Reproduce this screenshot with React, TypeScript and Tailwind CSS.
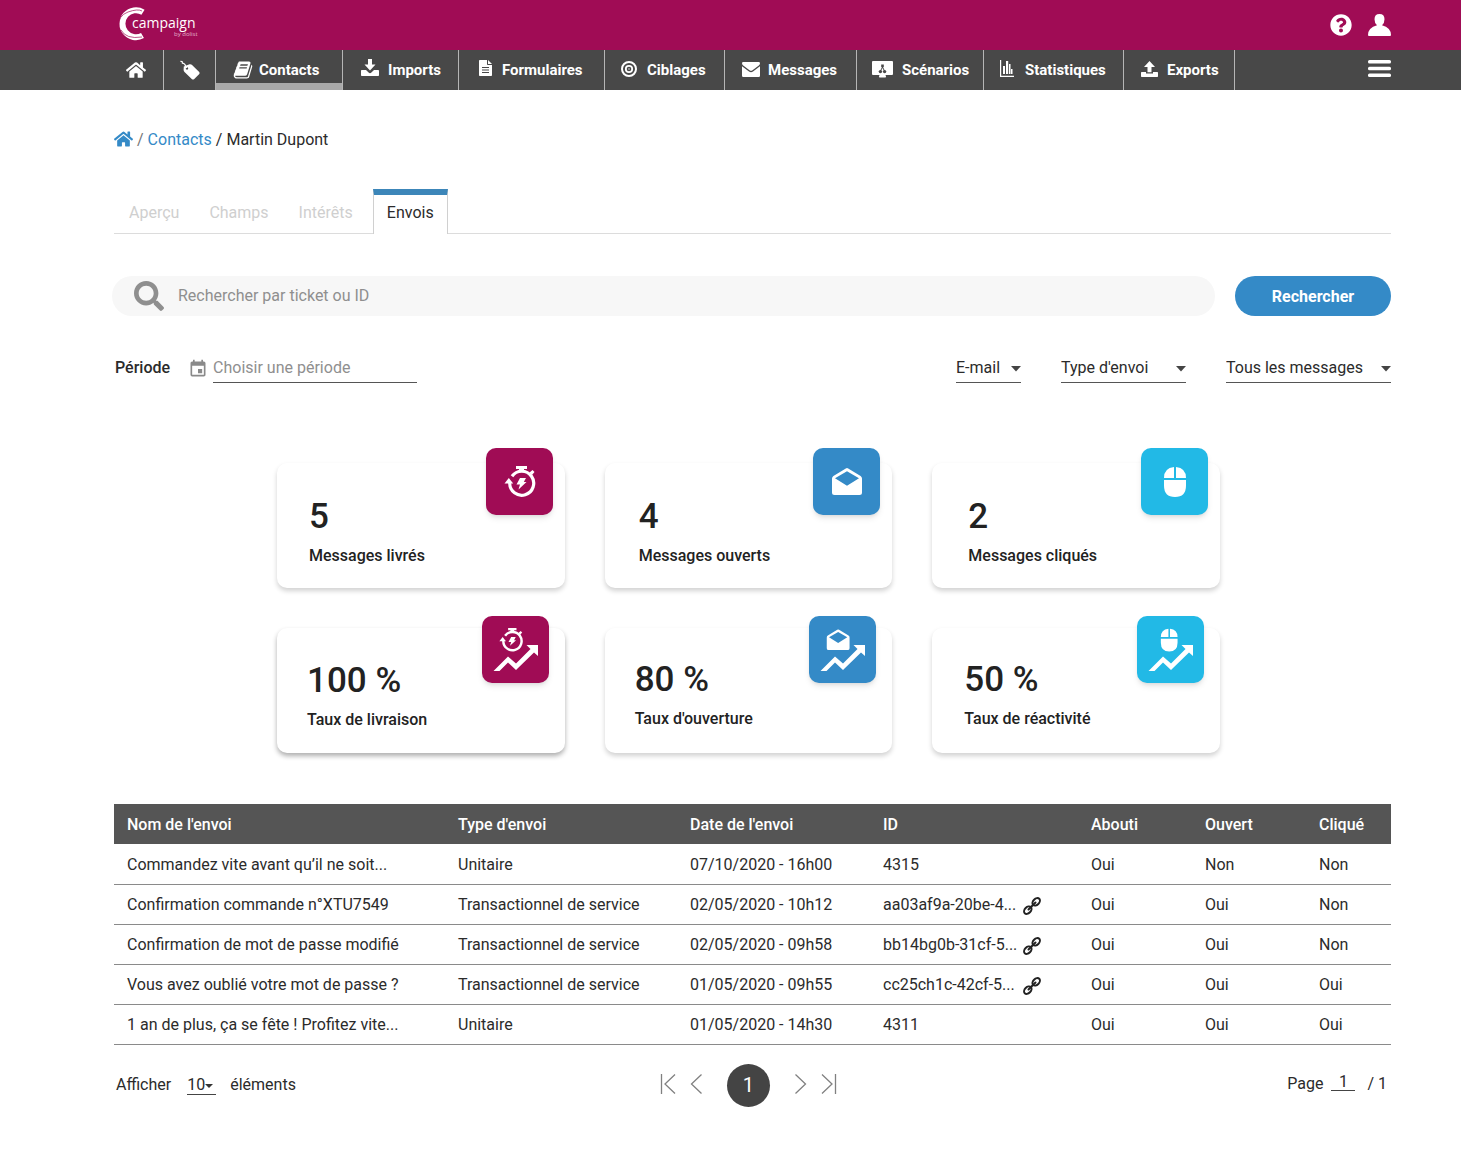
import React from "react";
import { FaHome, FaQuestionCircle, FaSearch } from "react-icons/fa";
import { MdEvent } from "react-icons/md";

function TagIcon() {
  return (
    <svg viewBox="0 0 20 20" className="h-5 w-5" fill="none">
      <path
        fill="currentColor"
        fillRule="evenodd"
        d="M3.800 6.500 9.500 4.300Q10.800 3.900 11.800 4.800L19.200 12Q20 13 19.300 14L14 19.200Q13 20 12 19.200L4.500 12Q3.700 11.200 3.600 10ZM7 7.200A1.200 1.200 0 1 0 7 9.600A1.200 1.200 0 1 0 7 7.200Z"
      />
      <path d="M.8 1.300 2.200 1.800 2.400 3.200Q4 3.400 4.800 4.400L6.500 7.500" stroke="currentColor" strokeWidth="1.200" strokeLinecap="round" />
    </svg>
  );
}

function BookIcon() {
  return (
    <svg viewBox="0 0 1792 1792" className="h-5 w-5" fill="currentColor">
      <path d="M1703 478q40 57 18 129l-275 906q-19 64-76.5 107.5t-122.5 43.5h-923q-77 0-148.5-53.5t-99.5-131.5q-24-67-2-127 0-4 3-27t4-37q1-8-3-21.5t-3-19.5q2-11 8-21t16.5-23.500 16.500-23.500q23-38 45-91.500t30-91.500q3-10 .5-30t-.5-28q3-11 17-28t17-23q21-36 42-92t25-90q1-9-2.500-32t.5-28q4-13 22-30.500t22-22.500q19-26 42.500-84.500t27.500-96.500q1-8-3-25.500t-2-26.500q2-8 9-18t18-23 17-21q8-12 16.500-30.500t15-35 16-36 19.500-32 26.500-23.500 36-11.500 47.500 5.500l-1 3q38-9 51-9h761q74 0 114 56t18 130l-274 906q-36 119-71.500 153.500t-128.500 34.500h-869q-27 0-38 15-11 16-1 43 24 70 144 70h923q29 0 56-15.500t35-41.500l300-987q7-22 5-57 38 15 59 43zm-1064 2q-4 13 2 22.500t20 9.500h608q13 0 25.500-9.500t16.500-22.500l21-64q4-13-2-22.500t-20-9.500h-608q-13 0-25.500 9.500t-16.500 22.500zm-83 256q-4 13 2 22.500t20 9.500h608q13 0 25.500-9.500t16.500-22.500l21-64q4-13-2-22.500t-20-9.500h-608q-13 0-25.500 9.500t-16.500 22.500z" />
    </svg>
  );
}

function DownloadIcon() {
  return (
    <svg viewBox="0 0 18 18" className="mb-1 h-[18px] w-[18px]" fill="currentColor">
      <path d="M7 0h4v5.500h3.500L9 11.500 3.500 5.500H7Z" />
      <path d="M.8 11H5l2.600 2.600q1.400 1.200 2.800 0L13 11h4.200q.8 0 .8.800v4.400q0 .8-.8.800H.8q-.8 0-.8-.8v-4.400Q0 11 .8 11Z" />
    </svg>
  );
}

function UploadIcon() {
  return (
    <svg viewBox="0 0 17 18" className="mb-0.5 h-[18px] w-[17px]" fill="currentColor">
      <path d="M8.500 1 14 7h-3.500v5.200h-4V7H3Z" />
      <path d="M.7 12H5v1.500h7V12h4.300q.7 0 .7.700v3.600q0 .7-.7.700H.7q-.7 0-.7-.7v-3.600Q0 12 .7 12Z" />
    </svg>
  );
}

function FileIcon() {
  return (
    <svg viewBox="0 0 13 16" className="mb-1 h-4 w-[13px]">
      <path fill="currentColor" d="M.8 0H8v4.200q0 .8.800.8H13v10.200q0 .8-.8.800H.8q-.8 0-.8-.8V.8Q0 0 .8 0ZM9 0l4 4H9Z" />
      <path stroke="#484848" strokeWidth="1" d="M3 7.500h7M3 10h7M3 12.500h7" />
    </svg>
  );
}

function TargetIcon() {
  return (
    <svg viewBox="0 0 16 16" className="mb-0.5 h-4 w-4" fill="none" stroke="currentColor">
      <circle cx="8" cy="8" r="7" strokeWidth="2" />
      <circle cx="8" cy="8" r="3.200" strokeWidth="1.800" />
      <circle cx="8" cy="8" r=".7" fill="currentColor" stroke="none" />
    </svg>
  );
}

function EnvelopeIcon() {
  return (
    <svg viewBox="0 0 18 15" className="mb-0.5 h-[15px] w-[18px]" fill="currentColor">
      <path d="M1.300 0h15.400Q18 0 18 1.300 18 2.600 16.800 3.500L10.500 8.300Q9 9.400 7.500 8.300L1.200 3.500Q0 2.600 0 1.300 0 0 1.300 0Z" />
      <path d="M0 4.300 7 9.500q2 1.400 4 0l7-5.200v9.400q0 1.300-1.300 1.300H1.300Q0 15 0 13.700Z" />
    </svg>
  );
}

function ScenarioIcon() {
  return (
    <svg viewBox="0 0 21 17" className="mb-0.5 h-[17px] w-[21px]" fill="currentColor">
      <path d="M1 0h19q1 0 1 1v12q0 1-1 1h-6.500l.5 1.500q.2 1-.8 1H7.800q-1 0-.8-1l.5-1.500H1q-1 0-1-1V1q0-1 1-1Z" />
      <g fill="#484848">
        <rect x="9.200" y="3.500" width="2.600" height="2.600" />
        <circle cx="8.400" cy="10.600" r="1.700" />
        <circle cx="12.600" cy="10.600" r="1.700" />
        <path d="M10 6h1l2 4h-1l-1.500-3L9 10H8Z" />
      </g>
    </svg>
  );
}

function ChartIcon() {
  return (
    <svg viewBox="0 0 14 17" className="mb-1 h-[17px] w-[14px]" fill="currentColor">
      <path d="M0 0h1.200v15.800H14V17H0ZM3 6h2v8H3ZM6 1h2.200v13H6ZM9 4h1.500v10H9ZM11 9h1.500v5H11Z" />
    </svg>
  );
}

function UserIcon() {
  return (
    <svg viewBox="0 0 23 22" className="h-[22px] w-[23px]" fill="currentColor">
      <path d="M11.500 0q5 0 5 5.200 0 4-2.500 6 9 2.500 9 9.800 0 1-1 1H1q-1 0-1-1 0-7.300 9-9.800-2.500-2-2.500-6Q6.500 0 11.500 0Z" />
    </svg>
  );
}

function LinkIcon() {
  return (
    <svg viewBox="0 0 18 18" className="mt-0.5 h-[18px] w-[18px]" fill="none" stroke="#222" strokeWidth="2">
      <ellipse cx="4.800" cy="13.200" rx="4.300" ry="3" transform="rotate(-45 4.800 13.200)" />
      <ellipse cx="13.200" cy="4.800" rx="4.300" ry="3" transform="rotate(-45 13.200 4.800)" />
      <path d="M5.500 12.500l7-7" strokeLinecap="round" />
    </svg>
  );
}

function Stopwatch() {
  return (
    <g>
      <path d="M12 0H23V3H20V5H15V3H12Z" fill="#fff" />
      <path d="M28.500 4 30.500 6 28 9 25.500 6.500Z" fill="#fff" />
      <path d="M8 10.200A12 12 0 1 1 5.700 17" fill="none" stroke="#fff" strokeWidth="3.200" />
      <path d="M.5 17.500 4.800 12 9.200 17.500Z" fill="#fff" />
      <path d="M16 12h6l-2.200 4H22.500L14.500 23.500l1.500-5H12.500Z" fill="#fff" />
    </g>
  );
}

function OpenMail() {
  return (
    <path
      fill="#fff"
      fillRule="evenodd"
      d="M16 2Q16.600 2 17.200 2.400L29.600 10Q31 11 31 12.500V26.500Q31 29 28.500 29H3.500Q1 29 1 26.500V12.500Q1 11 2.400 10L14.800 2.400Q15.400 2 16 2ZM16 5.200 4 12.300 16 19.700 28 12.300Z"
    />
  );
}

function Mouse() {
  return (
    <path fill="#fff" d="M15 1v11H5Q5 2 15 1ZM17 1v11H27Q27 2 17 1ZM5 14H27V19.500Q27 31 16 31T5 19.500Z" />
  );
}

function TrendArrow() {
  return <path d="M11.500 55 26 40.500 34 47.500 48.500 33 44.500 29H56V40L52 36.500 34 54 26 46.500 17.500 55Z" fill="#fff" />;
}

function Badge({ glyph, trend, tone }: { glyph: React.ReactNode; trend: boolean; tone: string }) {
  return (
    <div className={`absolute size-[67px] rounded-[10px] shadow-md ${trend ? "-top-3 right-4" : "-top-[15px] right-3"} ${tone}`}>
      <svg viewBox="0 0 67 67" className="size-full">
        {trend ? (
          <>
            <g transform="translate(17 12) scale(.76)">{glyph}</g>
            <TrendArrow />
          </>
        ) : (
          <g transform="translate(18 18)">{glyph}</g>
        )}
      </svg>
    </div>
  );
}

const stats = [
  { value: "5", label: "Messages livrés", glyph: <Stopwatch />, trend: false, tone: "bg-[#a00c55]", pad: "pt-8 pl-8", shadow: "shadow-[0_3px_5px_rgba(0,0,0,0.18)]" },
  { value: "4", label: "Messages ouverts", glyph: <OpenMail />, trend: false, tone: "bg-[#348ac7]", pad: "pt-8 pl-[34px]", shadow: "shadow-[0_3px_5px_rgba(0,0,0,0.18)]" },
  { value: "2", label: "Messages cliqués", glyph: <Mouse />, trend: false, tone: "bg-[#22b9e6]", pad: "pt-8 pl-9", shadow: "shadow-[0_3px_5px_rgba(0,0,0,0.18)]" },
  { value: "100 %", label: "Taux de livraison", glyph: <Stopwatch />, trend: true, tone: "bg-[#a00c55]", pad: "pt-[31px] pl-[30px]", shadow: "shadow-[0_3px_5px_rgba(0,0,0,0.32)]" },
  { value: "80 %", label: "Taux d'ouverture", glyph: <OpenMail />, trend: true, tone: "bg-[#348ac7]", pad: "pt-[30px] pl-[30px]", shadow: "shadow-[0_3px_5px_rgba(0,0,0,0.18)]" },
  { value: "50 %", label: "Taux de réactivité", glyph: <g transform="translate(4 0)"><Mouse /></g>, trend: true, tone: "bg-[#22b9e6]", pad: "pt-[30px] pl-8", shadow: "shadow-[0_3px_5px_rgba(0,0,0,0.18)]" },
];

const navItems = [
  { label: "Contacts", icon: <BookIcon />, box: "w-[127px] pl-[17px] gap-[6px]", active: true },
  { label: "Imports", icon: <DownloadIcon />, box: "w-[116px] pl-[18px] gap-[9px]" },
  { label: "Formulaires", icon: <FileIcon />, box: "w-[146px] pl-[20px] gap-[10px]" },
  { label: "Ciblages", icon: <TargetIcon />, box: "w-[120px] pl-[16px] gap-[10px]" },
  { label: "Messages", icon: <EnvelopeIcon />, box: "w-[132px] pl-[17px] gap-[8px]" },
  { label: "Scénarios", icon: <ScenarioIcon />, box: "w-[127px] pl-[15px] gap-[9px]" },
  { label: "Statistiques", icon: <ChartIcon />, box: "w-[140px] pl-[16px] gap-[11px]" },
  { label: "Exports", icon: <UploadIcon />, box: "w-[111px] pl-[17px] gap-[9px]" },
];

const columns = [
  { label: "Nom de l'envoi", width: "w-[331px]" },
  { label: "Type d'envoi", width: "w-[232px]" },
  { label: "Date de l'envoi", width: "w-[193px]" },
  { label: "ID", width: "w-[208px]" },
  { label: "Abouti", width: "w-[114px]" },
  { label: "Ouvert", width: "w-[114px]" },
  { label: "Cliqué", width: "w-[85px]" },
];

const rows = [
  { name: "Commandez vite avant qu’il ne soit...", type: "Unitaire", date: "07/10/2020 - 16h00", id: "4315", link: false, flags: ["Oui", "Non", "Non"] },
  { name: "Confirmation commande n°XTU7549", type: "Transactionnel de service", date: "02/05/2020 - 10h12", id: "aa03af9a-20be-4...", link: true, flags: ["Oui", "Oui", "Non"] },
  { name: "Confirmation de mot de passe modifié", type: "Transactionnel de service", date: "02/05/2020 - 09h58", id: "bb14bg0b-31cf-5...", link: true, flags: ["Oui", "Oui", "Non"] },
  { name: "Vous avez oublié votre mot de passe ?", type: "Transactionnel de service", date: "01/05/2020 - 09h55", id: "cc25ch1c-42cf-5...", link: true, flags: ["Oui", "Oui", "Oui"] },
  { name: "1 an de plus, ça se fête ! Profitez vite...", type: "Unitaire", date: "01/05/2020 - 14h30", id: "4311", link: false, flags: ["Oui", "Oui", "Oui"] },
];

const cell = "p-0 pt-0.5 pl-[13px]";

function Filter({ label, width }: { label: string; width: string }) {
  return (
    <div className={`relative border-b border-[#555] ${width}`}>
      <select aria-label={label} className="block h-[30px] w-full appearance-none bg-transparent pt-0.5 outline-none">
        <option>{label}</option>
      </select>
      <svg viewBox="0 0 10 6" className="pointer-events-none absolute right-0 top-[14px] h-[6px] w-[10px]">
        <path d="M0 0h10L5 5.500Z" fill="#444" />
      </svg>
    </div>
  );
}

function PagerButton({ label, d, width }: { label: string; d: string; width: number }) {
  return (
    <button type="button" aria-label={label} className="pb-[3px] text-[#808080]">
      <svg width={width} height="20" viewBox={`0 0 ${width} 20`} fill="none" stroke="currentColor" strokeWidth="1.300">
        <path d={d} />
      </svg>
    </button>
  );
}

export default function App() {
  return (
    <div className="min-h-screen bg-white font-['Roboto',sans-serif] text-base text-[#2b2b2b]">
      <header>
        <div className="flex h-[50px] items-center justify-between bg-[#a00c55] pl-[116px] pr-[70px] text-white">
          <a href="#" aria-label="Campaign by dolist">
            <svg viewBox="0 0 84 36" className="h-9 w-[84px]">
              <path d="M27 5.200A13.500 13.500 0 1 0 26.500 28.500" fill="none" stroke="#fff" strokeWidth="6" />
              <path d="M2.500 20Q2 8.500 12 5T26 4" fill="none" stroke="#a00c55" strokeWidth=".7" />
              <path d="M5 23Q10 32.500 26 30" fill="none" stroke="#a00c55" strokeWidth=".7" />
              <text x="16" y="21" fill="#fff" fontFamily="Open Sans" fontSize="14">campaign</text>
              <text x="58" y="29" fill="#e3b5cb" fontFamily="Open Sans" fontSize="6">by dolist</text>
            </svg>
          </a>
          <div className="flex items-center gap-4">
            <button type="button" aria-label="Aide">
              <FaQuestionCircle className="h-[22px] w-[22px]" />
            </button>
            <button type="button" aria-label="Mon compte">
              <UserIcon />
            </button>
          </div>
        </div>
        <nav className="flex h-10 items-stretch bg-[#484848] pl-[108px] pr-[70px] text-[15px] font-bold text-white">
          <a href="#" aria-label="Accueil" className="flex w-14 items-center justify-center border-r border-[#b5b5b5]">
            <FaHome className="h-5 w-5" />
          </a>
          <a href="#" aria-label="Étiquettes" className="flex w-[52px] items-center justify-center border-r border-[#b5b5b5]">
            <TagIcon />
          </a>
          {navItems.map((item) => (
            <a
              key={item.label}
              href="#"
              className={`flex items-center border-r border-[#b5b5b5] ${item.box} ${item.active ? "shadow-[inset_0_-7px_0_#a9a9a9]" : ""}`}
            >
              {item.icon}
              <span>{item.label}</span>
            </a>
          ))}
          <button type="button" aria-label="Menu" className="ml-auto pb-1">
            <svg viewBox="0 0 23 17" className="h-[17px] w-[23px]" fill="#fff">
              <rect width="23" height="3.400" rx="1.500" />
              <rect y="6.800" width="23" height="3.400" rx="1.500" />
              <rect y="13.600" width="23" height="3.400" rx="1.500" />
            </svg>
          </button>
        </nav>
      </header>

      <main className="pb-12 pl-[114px] pr-[70px] pt-[37px]">
        <nav aria-label="Fil d'Ariane" className="flex h-[26px] items-center gap-1">
          <a href="#" aria-label="Accueil" className="pb-[3px] text-[#348ac7]">
            <FaHome className="h-5 w-[19px]" />
          </a>
          <span className="text-[#777]">/</span>
          <a href="#" className="text-[#348ac7]">Contacts</a>
          <span>/</span>
          <span>Martin Dupont</span>
        </nav>

        <div role="tablist" className="mt-9 flex h-[45px] items-stretch text-[#cfcfcf]">
          <div className="flex gap-[30px] border-b border-[#dcdcdc] pl-[15px] pr-5 pt-[3px]">
            <button type="button" role="tab" aria-selected="false">Aperçu</button>
            <button type="button" role="tab" aria-selected="false">Champs</button>
            <button type="button" role="tab" aria-selected="false">Intérêts</button>
          </div>
          <button type="button" role="tab" aria-selected="true" className="w-[75px] border-x border-t-[6px] border-x-[#d0d0d0] border-t-[#3c86b9] pb-1 text-[#2b2b2b]">
            Envois
          </button>
          <div className="flex-1 border-b border-[#dcdcdc]" />
        </div>

        <form className="mt-[42px] flex gap-5" onSubmit={(e) => e.preventDefault()}>
          <div className="-ml-0.5 flex h-10 flex-1 items-center gap-[14px] rounded-full bg-[#f7f7f7] px-[22px]">
            <FaSearch className="h-[30px] w-[30px] text-[#8f8f8f]" />
            <input aria-label="Rechercher par ticket ou ID" placeholder="Rechercher par ticket ou ID" className="flex-1 bg-transparent outline-none placeholder:text-[#8f8f8f]" />
          </div>
          <button type="submit" className="h-10 w-[156px] rounded-full bg-[#348ac7] pt-0.5 font-bold text-white">Rechercher</button>
        </form>

        <div className="mt-9 flex items-end">
          <label htmlFor="periode" className="flex h-[31px] items-center pl-px font-medium">Période</label>
          <div className="ml-[18px] flex h-[31px] items-center pt-0.5">
            <MdEvent className="h-5 w-5 text-[#8a8a8a]" />
          </div>
          <input id="periode" placeholder="Choisir une période" className="ml-[5px] h-[31px] w-[204px] border-b border-[#555] bg-transparent outline-none placeholder:text-[#8f8f8f]" />
          <div className="ml-auto flex gap-10">
            <Filter label="E-mail" width="w-[65px]" />
            <Filter label="Type d'envoi" width="w-[125px]" />
            <Filter label="Tous les messages" width="w-[165px]" />
          </div>
        </div>

        <div className="mt-20 pr-2">
          <section className="mx-auto grid max-w-[943px] grid-cols-3 gap-10">
            {stats.map((s) => (
              <div key={s.label} className={`relative h-[125px] rounded-[10px] bg-white text-[#222] ${s.pad} ${s.shadow}`}>
                <p className="text-[35px] font-medium leading-[44px]">{s.value}</p>
                <p className="mt-[5px] font-medium leading-6">{s.label}</p>
                <Badge glyph={s.glyph} trend={s.trend} tone={s.tone} />
              </div>
            ))}
          </section>
        </div>

        <table className="mt-[51px] w-full table-fixed border-collapse text-left">
          <thead className="bg-[#555] text-white">
            <tr className="h-10">
              {columns.map((c) => (
                <th key={c.label} className={`p-0 pt-0.5 pl-[13px] font-medium ${c.width}`}>{c.label}</th>
              ))}
            </tr>
          </thead>
          <tbody>
            {rows.map((r) => (
              <tr key={r.name} className="h-10 border-b border-[#8a8a8a]">
                <td className={cell}>{r.name}</td>
                <td className={cell}>{r.type}</td>
                <td className={cell}>{r.date}</td>
                <td className={cell}>
                  <span className="flex items-center">
                    <span className={r.link ? "w-[140px]" : ""}>{r.id}</span>
                    {r.link && (
                      <a href="#" aria-label="Ouvrir le lien">
                        <LinkIcon />
                      </a>
                    )}
                  </span>
                </td>
                {r.flags.map((f, i) => (
                  <td key={i} className={cell}>{f}</td>
                ))}
              </tr>
            ))}
          </tbody>
        </table>

        <footer className="mt-[19px] grid grid-cols-3 items-center">
          <div className="flex items-center pl-0.5">
            <label htmlFor="taille">Afficher</label>
            <div className="relative ml-4 w-[29px] border-b border-[#444]">
              <select id="taille" className="block h-[18px] w-full appearance-none bg-transparent leading-[18px] outline-none">
                <option>10</option>
              </select>
              <svg viewBox="0 0 8 4" className="pointer-events-none absolute right-[3px] top-2 h-1 w-2">
                <path d="M0 0h8L4 4Z" fill="#333" />
              </svg>
            </div>
            <span className="ml-[14px]">éléments</span>
          </div>
          <div className="flex items-center justify-center pr-2">
            <PagerButton label="Première page" width={16} d="M1.500 0v20M15 .5 5 10l10 9.500" />
            <span className="w-[14px]" />
            <PagerButton label="Page précédente" width={12} d="M11.500.5 1.500 10l10 9.500" />
            <button type="button" aria-current="page" className="mx-[25px] size-[43px] rounded-full bg-[#444] text-xl text-white">1</button>
            <PagerButton label="Page suivante" width={12} d="M.5.500 10.500 10 .5 19.500" />
            <span className="w-[14px]" />
            <PagerButton label="Dernière page" width={16} d="M14.500 0v20M1 .5 11 10 1 19.500" />
          </div>
          <div className="flex items-center justify-end pb-0.5 pr-1">
            <label htmlFor="page">Page</label>
            <input id="page" defaultValue="1" className="mb-1 ml-2 mr-3 h-[18px] w-6 border-b border-[#444] bg-transparent text-center outline-none" />
            <span>/ 1</span>
          </div>
        </footer>
      </main>
    </div>
  );
}
